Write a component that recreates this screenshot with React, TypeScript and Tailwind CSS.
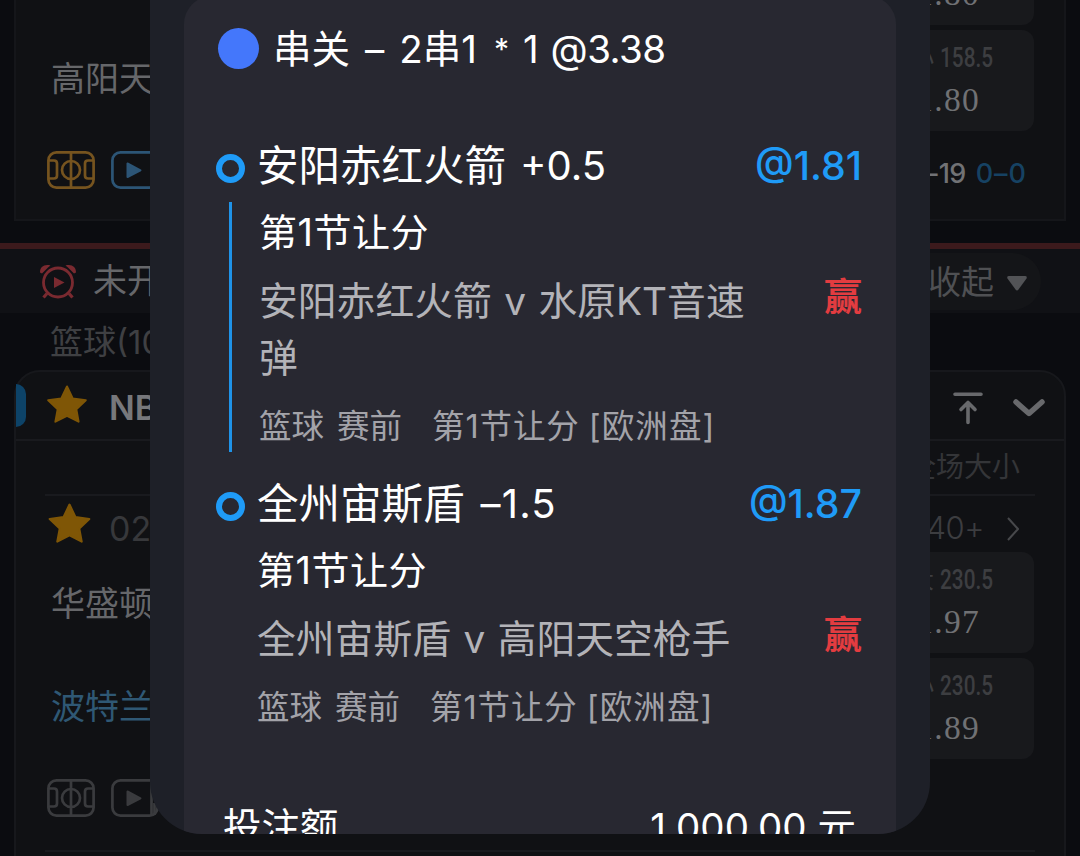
import clsx from 'clsx'

const legs = [
  {
    name: '安阳赤红火箭',
    line: '+0.5',
    odds: '@1.81',
    home: '安阳赤红火箭',
    away: '水原KT音速弹',
    result: '赢',
  },
  {
    name: '全州宙斯盾',
    line: '–1.5',
    odds: '@1.87',
    home: '全州宙斯盾',
    away: '高阳天空枪手',
    result: '赢',
  },
]

function CourtIcon({ className }: { className?: string }) {
  return (
    <svg viewBox="0 0 48 38" className={clsx('h-[38px] w-12', className)} fill="none" stroke="currentColor" strokeWidth="2.7">
      <rect x="1.400" y="1.400" width="45.200" height="35.200" rx="8" />
      <path d="M24 1v36M1 9.500h6q3 0 3 3v12q0 3-3 3H1M47 9.500h-6q-3 0-3 3v12q0 3 3 3h6" />
      <circle cx="24" cy="19" r="9" />
    </svg>
  )
}

function PlayIcon({ className }: { className?: string }) {
  return (
    <svg viewBox="0 0 48 38" className={clsx('h-[38px] w-12', className)} fill="none" stroke="currentColor" strokeWidth="2.7">
      <rect x="1.400" y="1.400" width="45.200" height="35.200" rx="8" />
      <path d="M40.500 2v35M43.500 24v12" />
      <path d="M16.500 12.500v13.500l13-6.700z" fill="currentColor" strokeLinejoin="round" strokeWidth="2" />
    </svg>
  )
}

function StarIcon({ className }: { className?: string }) {
  return (
    <svg viewBox="0 0 40 38" className={className} fill="#7f5606" stroke="#7f5606" strokeWidth="2" strokeLinejoin="round">
      <path d="M20 1.500l5.700 11.900 13.100 1.800-9.500 9.100 2.300 12.400L20 30.800 8.400 36.700l2.300-12.400L1.200 15.200l13.100-1.800z" />
    </svg>
  )
}

function ClockIcon() {
  return (
    <svg viewBox="0 0 36 35" className="h-[35px] w-9" fill="none" stroke="#7a2a30" strokeWidth="2.800">
      <circle cx="18" cy="18.500" r="14.500" />
      <path d="M7 29.500l-3.500 4M29 29.500l3.500 4" strokeWidth="3.200" />
      <path d="M0 8.500C0 3 4 0 10.500 1.500L8 3.500 2 9.500zM36 8.500C36 3 32 0 25.500 1.500L28 3.500 34 9.500z" fill="#7a2a30" stroke="none" />
      <path d="M14 13v11l10.500-5.500z" fill="#7a2a30" stroke="none" />
    </svg>
  )
}

// 大小球盘口
function OddsBox({ label, value, odds, className }: { label: string; value: string; odds: string; className?: string }) {
  return (
    <div className={clsx('flex w-[200px] flex-col items-end rounded-xl bg-[#18191c]', className)}>
      <div className="mr-[41px] mt-[10px] flex h-9 items-center leading-9 text-[#3d3e41]">
        <span className="mr-[6px] text-[24px]">{label}</span>
        <span className="w-[53px] whitespace-nowrap font-['Roboto'] text-[27px] font-medium">
          <span className="inline-block origin-left scale-x-[0.77]">{value}</span>
        </span>
      </div>
      <div className="mr-[54px] mt-[4px] font-['Liberation_Serif'] text-[33.500px] leading-[40px] tracking-[1.300px] text-[#707174]">
        {odds}
      </div>
    </div>
  )
}

function LiveCard() {
  return (
    <div className="mx-[14px] flex h-[221px] shrink-0 justify-between border-x-2 border-b-2 border-[#15161a] bg-[#101114]">
      <div className="flex flex-col pl-[31px]">
        <div className="mt-[54px] pl-1 text-[34px] leading-[50px] text-[#66676a]">高阳天空枪手</div>
        <div className="mt-[47px] flex gap-4">
          <CourtIcon className="text-[#76541f]" />
          <PlayIcon className="text-[#2c5576]" />
        </div>
      </div>
      <div className="flex flex-col items-end pr-[30px]">
        <OddsBox label="大" value="158.5" odds="1.80" className="-mt-[76px] h-[101px]" />
        <OddsBox label="小" value="158.5" odds="1.80" className="mt-[5px] h-[101px]" />
        <div className="mr-[7px] mt-[23px] flex gap-[10px] text-[27px] font-medium leading-10">
          <span className="tracking-[-0.700px] text-[#717275]">18-19</span>
          <span className="tracking-[1px] text-[#164263]">0–0</span>
        </div>
      </div>
    </div>
  )
}

function UpcomingHeader() {
  return (
    <div className="mt-[22px] flex h-[70px] shrink-0 items-center justify-between border-t-[6px] border-[#3c1a1c] bg-[#101115]">
      <div className="flex items-center gap-[17px] pl-10">
        <ClockIcon />
        <span className="text-[34px] leading-[50px] text-[#66676a]">未开赛</span>
      </div>
      <div className="mr-[39px] flex h-[57px] w-[170px] items-center justify-end gap-[13px] rounded-full bg-[#141518] pr-[14px]">
        <span className="mt-[2px] text-[33px] leading-[50px] text-[#4f5053]">收起</span>
        <svg viewBox="0 0 20 15" className="mt-1 h-[15px] w-5" fill="#525356">
          <path d="M2 0h16q2.500 0 1.500 2.500L11.500 13.500q-1.500 2-3 0L.5 2.500Q-.5 0 2 0z" />
        </svg>
      </div>
    </div>
  )
}

function LeagueCard() {
  return (
    <div className="mx-[14px] flex h-[500px] shrink-0 flex-col rounded-t-[26px] border-2 border-[#17181c] bg-[#101114]">
      <div className="flex h-[69px] items-center justify-between border-b-2 border-[#191a1e]">
        <div className="flex items-center">
          <div className="h-[43px] w-[10px] rounded-r-full bg-[#0d4368]" />
          <StarIcon className="-mt-[3px] ml-[21px] h-[38px] w-10" />
          <span className="ml-[22px] mt-[5px] text-[34px] font-semibold leading-[50px] text-[#77787b]">NBA</span>
        </div>
        <div className="flex items-center gap-[29px] pr-[18px] pt-[5px]">
          <svg viewBox="0 0 30 33" className="h-[33px] w-[30px]" fill="none" stroke="#68696c" strokeWidth="3.600" strokeLinecap="round" strokeLinejoin="round">
            <path d="M2 2.200h26M15 30.500V11M8 17.500l7-7 7 7" />
          </svg>
          <svg viewBox="0 0 34 20" className="h-5 w-[34px]" fill="none" stroke="#68696c" strokeWidth="5.500" strokeLinecap="round" strokeLinejoin="round">
            <path d="M4 4l13 11.500L30 4" />
          </svg>
        </div>
      </div>
      <div className="mx-[29px] h-[55px] border-b-2 border-[#191a1e] pr-[15px] text-right text-[28px] leading-[52px] text-[#343538]">
        全场大小
      </div>
      <div className="ml-[32px] mr-[30px] flex justify-between">
        <div className="flex flex-col">
          <div className="flex h-[57px] items-center">
            <StarIcon className="-mt-[3px] h-10 w-[43px]" />
            <span className="ml-[18px] mt-[9px] text-[34px] leading-[50px] text-[#37383b]">02:00</span>
          </div>
          <div className="mt-[26px] pl-[3px] text-[34px] leading-[50px] text-[#66676a]">华盛顿奇才</div>
          <div className="mt-[53px] pl-[3px] text-[34px] leading-[50px] text-[#2f5874]">波特兰开拓者</div>
          <div className="-ml-px mt-[47px] flex gap-4">
            <CourtIcon className="text-[#3a3b3e]" />
            <PlayIcon className="text-[#3a3b3e]" />
          </div>
        </div>
        <div className="flex flex-col items-end">
          <div className="mt-[7px] flex h-[49px] items-center gap-[23px] pr-[15px]">
            <span className="text-[31px] font-light leading-[49px] tracking-[-0.500px] text-[#3c3d40]">140+</span>
            <svg viewBox="0 0 12 24" className="mt-[3px] h-6 w-3" fill="none" stroke="#47484b" strokeWidth="2">
              <path d="M1 1l10 11L1 23" />
            </svg>
          </div>
          <OddsBox label="大" value="230.5" odds="1.97" className="h-[101px]" />
          <OddsBox label="小" value="230.5" odds="1.89" className="mt-[5px] h-[101px]" />
        </div>
      </div>
      <div className="mx-[29px] mt-[33px] h-[2px] bg-[#191a1e]" />
    </div>
  )
}

function Dot() {
  return <span className="mt-[5px] block h-[29px] w-[29px] shrink-0 rounded-full border-[6px] border-[#1f9bf7]" />
}

function Leg({ leg, first }: { leg: (typeof legs)[number]; first: boolean }) {
  return (
    <div className="flex">
      <div className={clsx('flex w-[29px] flex-col items-center', first ? 'mr-[14px]' : 'mr-[12px]')}>
        <div className="flex h-[60px] items-center">
          <Dot />
        </div>
        {first && <div className="mr-[1px] mt-[6px] h-[250px] w-[3px] bg-[#1f93e8]" />}
      </div>
      <div className="flex flex-1 flex-col">
        <div className={clsx('flex h-[60px] items-center justify-between text-white', first && '-ml-[2px]')}>
          <div className="flex items-center whitespace-nowrap">
            <span className="text-[41.500px] leading-[60px]">{leg.name}</span>
            <span className={clsx('text-[40px] leading-[60px]', first ? 'ml-[14px]' : 'ml-[16px] tracking-[1.200px]')}>{leg.line}</span>
          </div>
          <span className="text-[39.300px] font-medium leading-[60px] text-[#1f9bf7]">{leg.odds}</span>
        </div>
        <div className="mt-[6px] text-[38px] leading-[60px] tracking-[0.500px] text-white">第1节让分</div>
        <div className="mt-[10px] flex justify-between">
          <div className="w-[500px] text-[38.800px] leading-[57px] [word-spacing:1.500px] text-[#b3b3b8]">
            {leg.home + ' v ' + leg.away}
          </div>
          <div className="-mt-px text-[38px] font-bold leading-[50px] text-[#e33c40]">{leg.result}</div>
        </div>
        <div className="mt-[21px] flex whitespace-nowrap text-[32.500px] leading-[40px] text-[#a3a3a9]">
          <span>篮球</span>
          <span className="ml-[13px]">赛前</span>
          <span className="ml-[30px] tracking-[0.900px]">第1节让分</span>
          <span className="ml-[9px] tracking-[1.100px]">[欧洲盘]</span>
        </div>
      </div>
    </div>
  )
}

export default function App() {
  return (
    <div className="relative h-[856px] w-[1080px] overflow-hidden bg-[#0b0c10] font-['Inter','Noto_Sans_CJK_SC',sans-serif]">
      <div className="flex h-[856px] flex-col overflow-hidden">
        <LiveCard />
        <UpcomingHeader />
        <div className="h-[57px] shrink-0 pl-[50px] text-[33px] leading-[58px] text-[#3f4043]">篮球(10)</div>
        <LeagueCard />
      </div>

      {/* 注单弹窗 */}
      <div className="absolute left-[150px] top-0 h-[834px] w-[780px] overflow-hidden rounded-b-[52px] bg-[#1e2028] px-[34px]">
        <div className="-mt-[4px] flex h-[900px] w-[712px] flex-col rounded-t-[28px] bg-[#282831] pl-8 pr-[34px] pt-[23px]">
          <div className="flex h-[60px] items-center whitespace-nowrap text-[38.500px] leading-[60px] text-white">
            <span className="-mt-px ml-[2px] mr-[14px] h-[41px] w-[41px] rounded-full bg-[#4477fb]" />
            <span>串关</span>
            <span className="ml-[15px]">–</span>
            <span className="ml-[15px]">2串1</span>
            <span className="ml-[17px] text-[30px]">*</span>
            <span className="ml-[14px]">1</span>
            <span className="ml-[12px] tracking-[-0.600px]">@3.38</span>
          </div>
          <div className="mt-[57px] flex flex-col gap-[22px]">
            {legs.map((leg, i) => (
              <Leg key={leg.name} leg={leg} first={i === 0} />
            ))}
          </div>
          <div className="ml-[7px] mr-[6px] mt-[69px] flex justify-between text-[38.500px] leading-[60px] text-white">
            <span>投注额</span>
            <span>1,000.00 元</span>
          </div>
        </div>
      </div>
    </div>
  )
}
